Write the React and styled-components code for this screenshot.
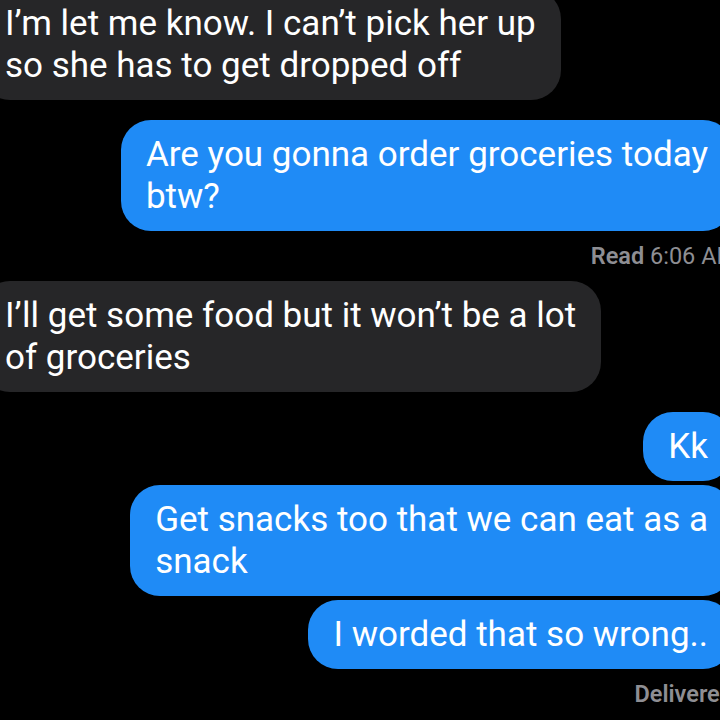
import React from 'react'
import styled, { createGlobalStyle } from 'styled-components'

const GlobalStyle = createGlobalStyle`
  html, body {
    margin: 0;
    padding: 0;
    background: #000;
    overflow: hidden;
  }
  body {
    font-family: Roboto, "Liberation Sans", sans-serif;
    -webkit-font-smoothing: antialiased;
  }
`

const Screen = styled.div`
  width: 720px;
  height: 720px;
  overflow: hidden;
  background: #000;
`

const Thread = styled.div`
  display: flex;
  flex-direction: column;
  width: 753px;
  margin: -11px 0 0 -20px;
`

const Bubble = styled.div`
  align-self: ${(p) => (p.$mine ? 'flex-end' : 'flex-start')};
  margin-top: ${(p) => p.$gap}px;
  padding: 13.5px 25px;
  border-radius: 30px;
  background: ${(p) => (p.$mine ? '#1f8bf6' : '#262628')};
  color: #fff;
  font-size: 35px;
  line-height: 42px;
  white-space: nowrap;
`

const Receipt = styled.div`
  align-self: flex-end;
  padding: 12px 0;
  margin-right: ${(p) => p.$right}px;
  font-size: 23.5px;
  line-height: 26px;
  color: #8e8e93;
  white-space: nowrap;

  b {
    font-weight: 600;
  }
`

const messages = [
  { mine: false, gap: 0, lines: ['I\u2019m let me know. I can\u2019t pick her up', 'so she has to get dropped off'] },
  { mine: true, gap: 20, lines: ['Are you gonna order groceries today', 'btw?'] },
  { receipt: 'read' },
  { mine: false, gap: 0, lines: ['I\u2019ll get some food but it won\u2019t be a lot', 'of groceries'] },
  { mine: true, gap: 20, lines: ['Kk'] },
  { mine: true, gap: 4, lines: ['Get snacks too that we can eat as a', 'snack'] },
  { mine: true, gap: 4, lines: ['I worded that so wrong..'] },
  { receipt: 'delivered' },
]

export default function App() {
  return (
    <Screen>
      <GlobalStyle />
      <Thread>
        {messages.map((m, i) => {
          if (m.receipt === 'read') {
            return (
              <Receipt key={i} $right={-4}>
                <b>Read</b> 6:06 AM
              </Receipt>
            )
          }
          if (m.receipt === 'delivered') {
            return (
              <Receipt key={i} $right={0}>
                <b>Delivered</b>
              </Receipt>
            )
          }
          return (
            <Bubble key={i} $mine={m.mine} $gap={m.gap}>
              {m.lines.map((l, j) => (
                <React.Fragment key={j}>
                  {j > 0 && <br />}
                  {l}
                </React.Fragment>
              ))}
            </Bubble>
          )
        })}
      </Thread>
    </Screen>
  )
}
